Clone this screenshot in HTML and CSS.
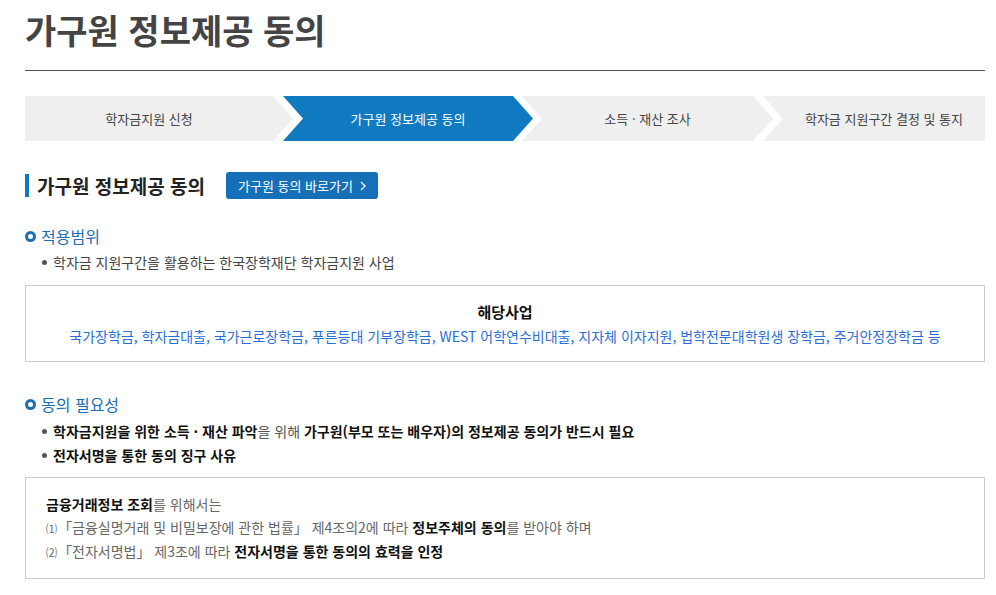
FILE: index.html
```html
<!DOCTYPE html>
<html lang="ko">
<head>
    <meta charset="UTF-8">
    <meta name="viewport" content="width=device-width, initial-scale=1.0">
    <title>가구원 정보제공 동의</title>
    <link rel="stylesheet" href="styles.css">
</head>
<body>
    <div class="wrap">
        <h1 class="page-title">가구원 정보제공 동의</h1>

        <ol class="steps">
            <li>학자금지원 신청</li>
            <li class="on">가구원 정보제공 동의</li>
            <li>소득 · 재산 조사</li>
            <li>학자금 지원구간 결정 및 통지</li>
        </ol>

        <div class="sec-head">
            <h2>가구원 정보제공 동의</h2>
            <a href="#" class="btn-go">가구원 동의 바로가기
                <svg width="6" height="10" viewBox="0 0 6 10"><polyline points="1,1 5,5 1,9" fill="none" stroke="#fff" stroke-width="1.3"/></svg>
            </a>
        </div>

        <h3 class="sub-title">적용범위</h3>
        <ul class="dot-list">
            <li>학자금 지원구간을 활용하는 한국장학재단 학자금지원 사업</li>
        </ul>

        <div class="box box-center">
            <p class="box-tit">해당사업</p>
            <p class="box-blue">국가장학금, 학자금대출, 국가근로장학금, 푸른등대 기부장학금, WEST 어학연수비대출, 지자체 이자지원, 법학전문대학원생 장학금, 주거안정장학금 등</p>
        </div>

        <h3 class="sub-title sec2">동의 필요성</h3>
        <ul class="dot-list strong">
            <li>학자금지원을 위한 소득 · 재산 파악<span class="normal">을 위해</span> 가구원(부모 또는 배우자)의 정보제공 동의가 반드시 필요</li>
            <li>전자서명을 통한 동의 징구 사유</li>
        </ul>

        <div class="box box-text">
            <p><b>금융거래정보 조회</b>를 위해서는</p>
            <p><span class="num">⑴</span>「금융실명거래 및 비밀보장에 관한 법률」 제4조의2에 따라 <b>정보주체의 동의</b>를 받아야 하며</p>
            <p><span class="num">⑵</span>「전자서명법」 제3조에 따라 <b>전자서명을 통한 동의의 효력을 인정</b></p>
        </div>
    </div>
</body>
</html>
```

FILE: styles.css
```css
body {
    margin: 0;
    font-family: "Noto Sans CJK KR", "Noto Sans", sans-serif;
    color: #444;
    background: #fff;
}

.wrap {
    width: 960px;
    padding-left: 25px;
}

.page-title {
    margin: 0;
    padding-top: 10px;
    font-size: 34px;
    line-height: 40px;
    font-weight: bold;
    color: #444;
    padding-bottom: 20px;
    border-bottom: 1px solid #55525e;
}

/* steps */
.steps {
    list-style: none;
    margin: 25px 0 0;
    padding: 0;
    display: flex;
    height: 45px;
}

.steps li {
    flex: none;
    display: flex;
    align-items: center;
    justify-content: center;
    background: #efefef;
    font-size: 13px;
    color: #444;
    margin-left: -10px;
    padding: 0 20px;
    box-sizing: border-box;
    clip-path: polygon(0 0, calc(100% - 20px) 0, 100% 50%, calc(100% - 20px) 100%, 0 100%, 20px 50%);
}

.steps li:nth-child(1) {
    width: 268px;
    margin-left: 0;
    padding-left: 0;
    clip-path: polygon(0 0, calc(100% - 20px) 0, 100% 50%, calc(100% - 20px) 100%, 0 100%);
}
.steps li:nth-child(2) { width: 250px; }
.steps li:nth-child(3) { width: 251px; margin-left: -11px; }
.steps li:nth-child(4) {
    width: 222px;
    padding-right: 0;
    clip-path: polygon(0 0, 100% 0, 100% 100%, 0 100%, 20px 50%);
}

.steps li.on {
    background: #0f7abf;
    color: #fff;
}

/* section head */
.sec-head {
    display: flex;
    align-items: center;
    margin-top: 31px;
    height: 27px;
}

.sec-head h2 {
    margin: 0;
    font-size: 19px;
    line-height: 23px;
    font-weight: bold;
    color: #222;
    border-left: 4px solid #0f7abf;
    padding-left: 8px;
}

.btn-go {
    display: inline-flex;
    align-items: center;
    gap: 7px;
    margin-left: 21px;
    height: 27px;
    padding: 0 12px;
    background: #1670b7;
    color: #fff;
    font-size: 13px;
    text-decoration: none;
    border-radius: 3px;
}

.sub-title {
    position: relative;
    margin: 27px 0 0;
    padding-left: 16px;
    font-size: 16px;
    line-height: 20px;
    font-weight: normal;
    color: #1c6eb4;
}

.sub-title::before {
    content: "";
    position: absolute;
    left: 0;
    top: 5px;
    width: 5px;
    height: 5px;
    border: 3px solid #1c6eb4;
    border-radius: 50%;
}

.sub-title.sec2 {
    margin-top: 32px;
}

.dot-list {
    list-style: none;
    margin: 6px 0 0;
    padding: 0 0 0 17px;
    font-size: 14px;
    line-height: 20px;
    color: #444;
}

.dot-list li {
    position: relative;
    padding-left: 11px;
}

.dot-list li::before {
    content: "";
    position: absolute;
    left: 0;
    top: 8px;
    width: 5px;
    height: 5px;
    border-radius: 50%;
    background: #555;
}

.dot-list.strong {
    margin-top: 5px;
    line-height: 24px;
    font-weight: bold;
    color: #111;
}

.dot-list.strong li::before {
    top: 10px;
}

.dot-list .normal {
    font-weight: normal;
    color: #555;
}

/* boxes */
.box {
    border: 1px solid #ccc;
    margin-top: 13px;
}

.box p {
    margin: 0;
}

.box-center {
    padding: 15px 0 14px;
    text-align: center;
}

.box-tit {
    font-size: 15px;
    line-height: 22px;
    font-weight: bold;
    color: #111;
}

.box-blue {
    margin-top: 2px !important;
    font-size: 14px;
    line-height: 22px;
    color: #2a6ed8;
}

.box-text {
    margin-top: 10px;
    padding: 15px 20px 14px;
    font-size: 14px;
    line-height: 23px;
    color: #666;
}

.box-text b {
    color: #111;
}

.num {
    font-size: 11px;
    margin-right: 1px;
}
```
